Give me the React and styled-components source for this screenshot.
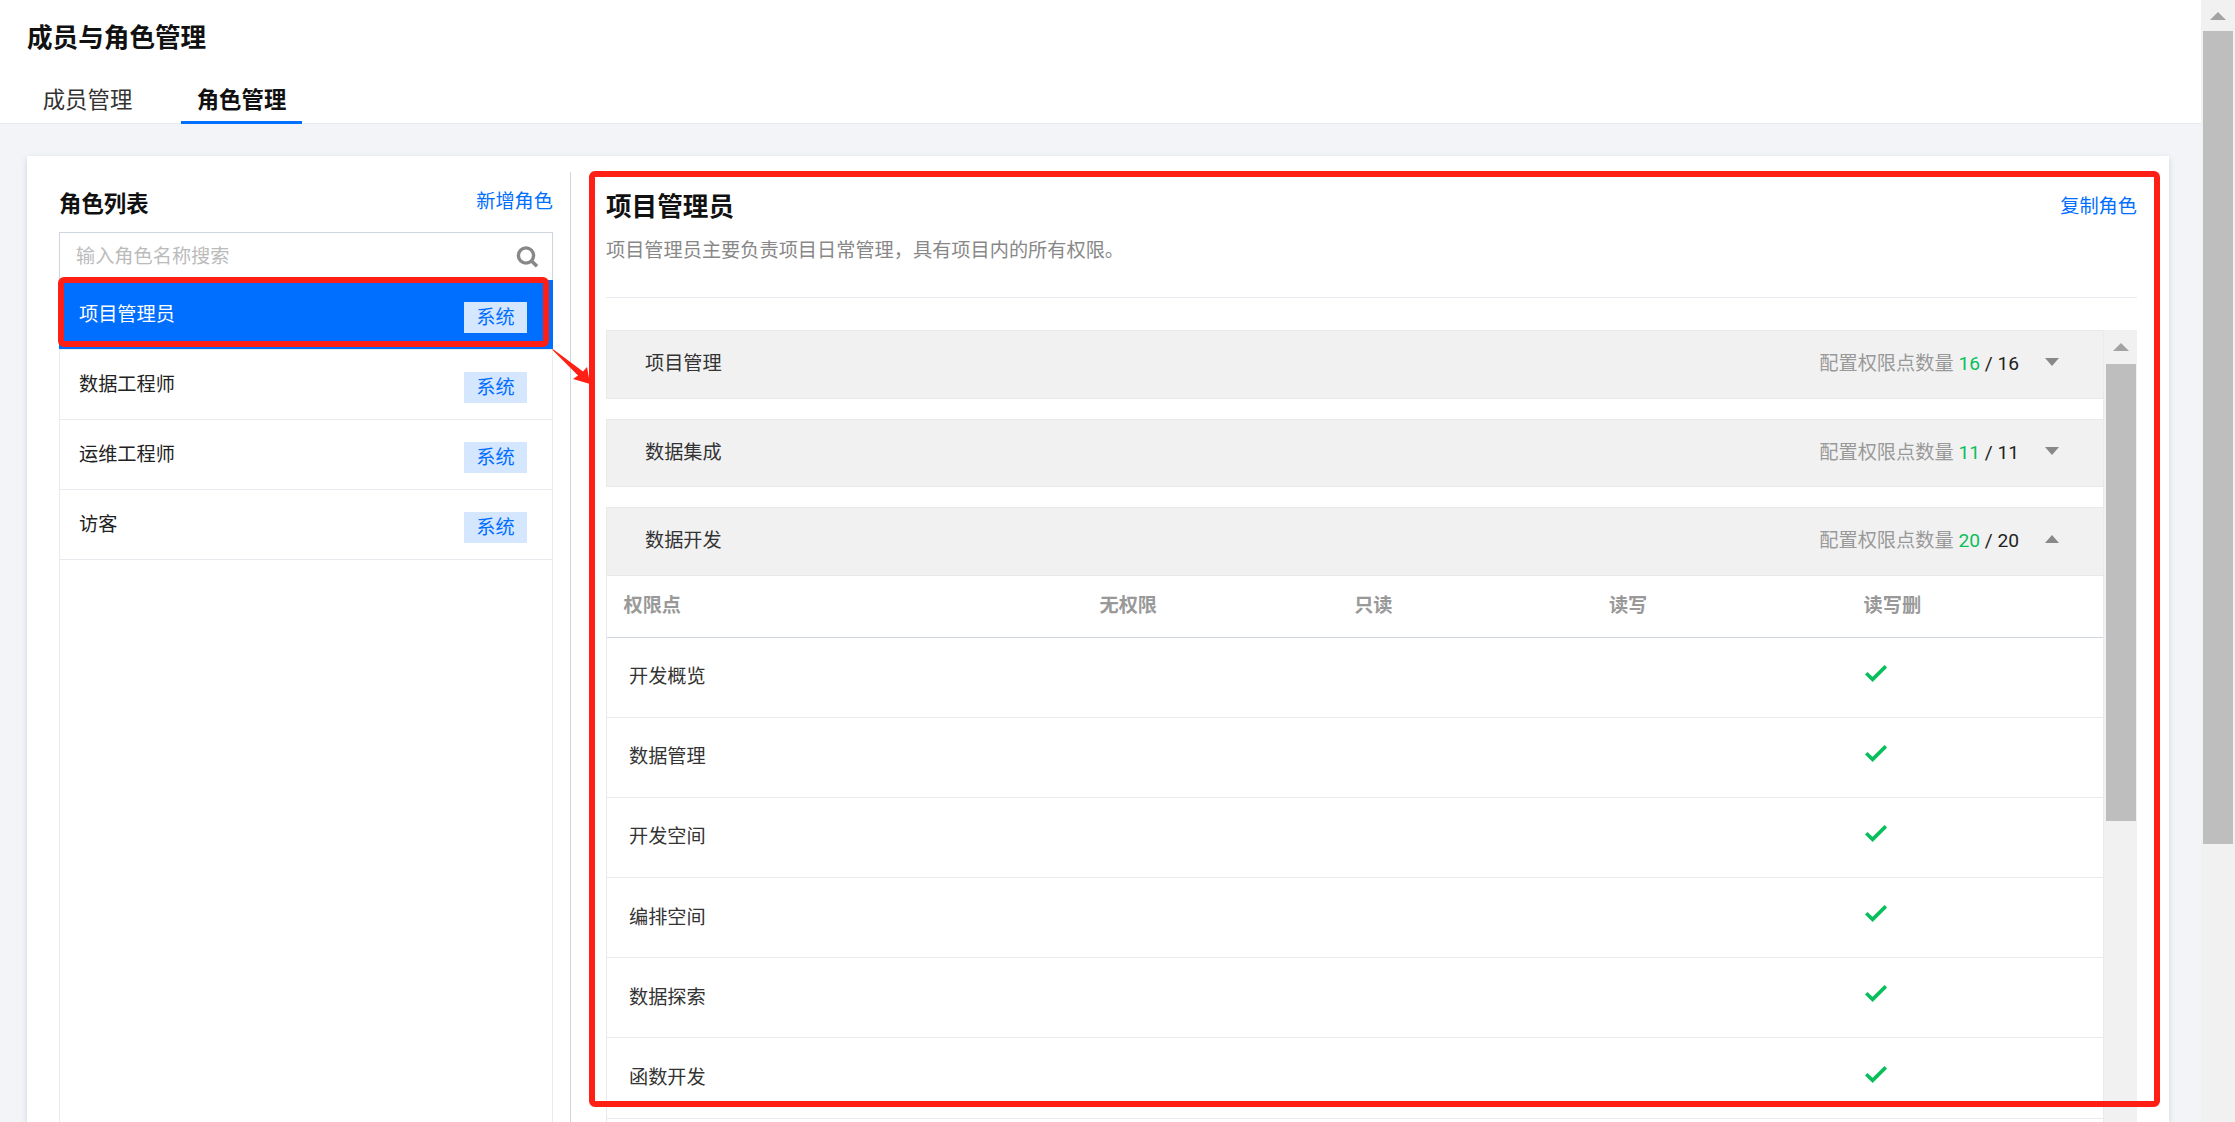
import React from 'react';
import styled, { createGlobalStyle } from 'styled-components';

const ROLES = ['项目管理员', '数据工程师', '运维工程师', '访客'];

const GROUPS = [
  { name: '项目管理', done: 16, total: 16 },
  { name: '数据集成', done: 11, total: 11 },
  { name: '数据开发', done: 20, total: 20, open: true },
];

const COLUMNS = ['权限点', '无权限', '只读', '读写', '读写删'];
const PERMISSIONS = ['开发概览', '数据管理', '开发空间', '编排空间', '数据探索', '函数开发', ''];

const App = () => {
  return (
    <Shell>
      <GlobalStyle />
      <Main>
        <Header>
          <PageTitle>成员与角色管理</PageTitle>
          <Tabs>
            <Tab>成员管理</Tab>
            <Tab $active>角色管理</Tab>
          </Tabs>
        </Header>

        <Content>
          <Card>
            <RolePanel>
              <RoleHead>
                <RoleHeading>角色列表</RoleHeading>
                <LinkText>新增角色</LinkText>
              </RoleHead>
              <SearchBox>
                <SearchInput placeholder="输入角色名称搜索" />
                <SearchIcon viewBox="0 0 23 22">
                  <circle cx="10" cy="9.5" r="7.6" fill="none" stroke="#888" strokeWidth="3.4" />
                  <path d="M15.5 15 L21 20.3" stroke="#888" strokeWidth="3.6" fill="none" />
                </SearchIcon>
              </SearchBox>
              <RoleList>
                {ROLES.map((role, i) => (
                  <RoleItem key={role} $active={i === 0}>
                    <RoleName>{role}</RoleName>
                    <SystemTag>系统</SystemTag>
                  </RoleItem>
                ))}
              </RoleList>
            </RolePanel>

            <DetailPanel>
              <DetailInfo>
                <DetailTitleRow>
                  <DetailTitle>项目管理员</DetailTitle>
                  <LinkText>复制角色</LinkText>
                </DetailTitleRow>
                <DetailDesc>项目管理员主要负责项目日常管理，具有项目内的所有权限。</DetailDesc>
              </DetailInfo>

              <GroupArea>
                <GroupList>
                  {GROUPS.map((group) => (
                    <Group key={group.name}>
                      <GroupHead>
                        <GroupName>{group.name}</GroupName>
                        <GroupMeta>
                          配置权限点数量 <DoneCount>{group.done}</DoneCount> <TotalCount>/ {group.total}</TotalCount>
                        </GroupMeta>
                        <Caret $up={group.open} />
                      </GroupHead>
                      {group.open && (
                        <PermTable>
                          <PermHeadRow>
                            {COLUMNS.map((col) => (
                              <PermHeadCell key={col}>{col}</PermHeadCell>
                            ))}
                          </PermHeadRow>
                          {PERMISSIONS.map((perm, i) => (
                            <PermRow key={i}>
                              <PermName>{perm}</PermName>
                              <PermCell />
                              <PermCell />
                              <PermCell />
                              <PermCell>
                                {perm && (
                                  <CheckIcon viewBox="0 0 22 17">
                                    <path d="M1.2 8.2 L7.6 14.4 L20.8 1.4" fill="none" stroke="#0abf5b" strokeWidth="3.6" />
                                  </CheckIcon>
                                )}
                              </PermCell>
                            </PermRow>
                          ))}
                        </PermTable>
                      )}
                    </Group>
                  ))}
                </GroupList>

                <InnerScroll>
                  <ScrollArrowBox $height={34}>
                    <ScrollArrow />
                  </ScrollArrowBox>
                  <ScrollThumb $height={457} />
                </InnerScroll>
              </GroupArea>
            </DetailPanel>
          </Card>
        </Content>
      </Main>

      <OuterScroll>
        <ScrollArrowBox $height={31}>
          <ScrollArrow />
        </ScrollArrowBox>
        <ScrollThumb $height={813} />
      </OuterScroll>

      <RoleMark />
      <PanelMark />
      <ArrowMark viewBox="0 0 42 38">
        <polygon points="2,1.5 3.5,1.5 33,23.5 37,19 40,36 23,31 28,27.5" fill="#ff1f14" />
      </ArrowMark>
    </Shell>
  );
};

export default App;


const GlobalStyle = createGlobalStyle`
  html, body {
    margin: 0;
    padding: 0;
    height: 100%;
    overflow: hidden;
    background: #fff;
  }

  body {
    font-family: Roboto, "Noto Sans CJK SC", sans-serif;
    font-size: 19.2px;
    color: #222;
  }

  * {
    box-sizing: border-box;
  }
`;

const Shell = styled.div`
  position: relative;
  display: flex;
  width: 2235px;
  height: 1122px;
  overflow: hidden;
`;

const Main = styled.div`
  flex: 1;
  min-width: 0;
  display: flex;
  flex-direction: column;
  background: #f2f4f8;
`;

const Header = styled.header`
  height: 124px;
  padding: 18px 0 0 27px;
  background: #fff;
  border-bottom: 1px solid #e7eaef;
`;

const PageTitle = styled.h1`
  margin: 0;
  font-size: 25.6px;
  line-height: 40px;
  font-weight: 700;
  color: #111;
`;

const Tabs = styled.div`
  display: flex;
  gap: 33px;
  margin-top: 5px;
`;

const Tab = styled.div`
  height: 61px;
  width: 121px;
  padding-top: 21px;
  text-align: center;
  font-size: 22.4px;
  line-height: 32px;
  color: ${(p) => (p.$active ? '#111' : '#333')};
  font-weight: ${(p) => (p.$active ? 700 : 400)};
  border-bottom: 3px solid ${(p) => (p.$active ? '#006eff' : 'transparent')};
`;

const Content = styled.main`
  flex: 1;
  min-height: 0;
  padding: 32px 32px 0 27px;
`;

const Card = styled.div`
  display: flex;
  height: 100%;
  padding: 16px 32px 0 32px;
  background: #fff;
  box-shadow: 0 2px 6px rgba(54, 58, 80, 0.16);
`;

const RolePanel = styled.section`
  width: 494px;
  flex: none;
  display: flex;
  flex-direction: column;
  margin-right: 17px;
`;

const RoleHead = styled.div`
  height: 60px;
  display: flex;
  align-items: center;
  justify-content: space-between;
`;

const RoleHeading = styled.h2`
  margin: 0;
  padding-top: 4px;
  font-size: 22.4px;
  line-height: 32px;
  font-weight: 700;
  color: #111;
`;

const LinkText = styled.a`
  font-size: 19.2px;
  line-height: 28px;
  color: #006eff;
`;

const SearchBox = styled.div`
  height: 48px;
  display: flex;
  align-items: center;
  padding: 0 13px 0 16px;
  border: 1px solid #cfd5de;
  border-bottom: none;
`;

const SearchInput = styled.input`
  flex: 1;
  min-width: 0;
  border: none;
  outline: none;
  padding: 0;
  font: inherit;
  font-size: 19.2px;
  color: #333;

  &::placeholder {
    color: #bbb;
    opacity: 1;
  }
`;

const SearchIcon = styled.svg`
  width: 23px;
  height: 22px;
  flex: none;
`;

const RoleList = styled.div`
  flex: 1;
  border-left: 1px solid #e7eaef;
  border-right: 1px solid #e7eaef;
`;

const RoleItem = styled.div`
  height: 70px;
  display: flex;
  align-items: center;
  justify-content: space-between;
  padding: ${(p) => (p.$active ? '0 26px 0 20px' : '0 25px 0 19px')};
  margin: 0 ${(p) => (p.$active ? '-1px' : '0')};
  background: ${(p) => (p.$active ? '#006eff' : '#fff')};
  color: ${(p) => (p.$active ? '#fff' : '#222')};
  border-bottom: 1px solid #e7eaef;
`;

const RoleName = styled.span`
  line-height: 28px;
`;

const SystemTag = styled.span`
  width: 63px;
  height: 31px;
  margin-top: 6px;
  text-align: center;
  font-size: 19.2px;
  line-height: 31px;
  color: #006eff;
  background: #d5e7ff;
`;

const DetailPanel = styled.section`
  flex: 1;
  min-width: 0;
  display: flex;
  flex-direction: column;
  padding-left: 35px;
  border-left: 1px solid #cfd5de;
`;

const DetailInfo = styled.div`
  padding: 15px 0 32px;
  margin-bottom: 32px;
  border-bottom: 1px solid #e7eaef;
`;

const DetailTitleRow = styled.div`
  display: flex;
  align-items: center;
  justify-content: space-between;
  height: 40px;
`;

const DetailTitle = styled.h2`
  margin: 0;
  font-size: 25.6px;
  line-height: 40px;
  font-weight: 700;
  color: #111;
`;

const DetailDesc = styled.p`
  margin: 10px 0 0;
  font-size: 19.2px;
  line-height: 28px;
  color: #888;
`;

const GroupArea = styled.div`
  flex: 1;
  min-height: 0;
  display: flex;
`;

const GroupList = styled.div`
  flex: 1;
  min-width: 0;
  overflow: hidden;
`;

const Group = styled.div`
  margin-bottom: 20px;
`;

const GroupHead = styled.div`
  height: 68.5px;
  display: flex;
  align-items: center;
  padding: 0 44px 0 38px;
  background: #f1f1f1;
  border: 1px solid #e9e9e9;
  border-right: none;
`;

const GroupName = styled.span`
  flex: 1;
  line-height: 28px;
  color: #333;
`;

const GroupMeta = styled.span`
  line-height: 28px;
  color: #999;
  white-space: nowrap;
`;

const DoneCount = styled.span`
  color: #0abf5b;
`;

const TotalCount = styled.span`
  color: #222;
`;

const Caret = styled.i`
  width: 0;
  height: 0;
  margin-left: 26px;
  margin-top: -4px;
  border-left: 7px solid transparent;
  border-right: 7px solid transparent;
  border-top: ${(p) => (p.$up ? 'none' : '8px solid #888')};
  border-bottom: ${(p) => (p.$up ? '8px solid #888' : 'none')};
`;

const PermTable = styled.div`
  border-left: 1px solid #e7eaef;
`;

const PermHeadRow = styled.div`
  display: grid;
  grid-template-columns: 476px repeat(4, 254.7px);
  height: 62px;
  align-items: center;
  border-bottom: 1px solid #cfd5de;
`;

const PermHeadCell = styled.div`
  padding-left: 16.5px;
  font-weight: 700;
  color: #999;
  line-height: 28px;
`;

const PermRow = styled.div`
  display: grid;
  grid-template-columns: 476px repeat(4, 254.7px);
  height: 80.2px;
  align-items: center;
  border-bottom: 1px solid #e7eaef;
`;

const PermName = styled.div`
  padding-left: 22px;
  line-height: 28px;
  color: #333;
`;

const PermCell = styled.div`
  padding-left: 18px;
  display: flex;
`;

const CheckIcon = styled.svg`
  width: 22px;
  height: 17px;
  margin-bottom: 8px;
`;

const InnerScroll = styled.div`
  width: 34px;
  flex: none;
  display: flex;
  flex-direction: column;
  align-items: center;
  background: #f1f1f1;
  border-left: 1px solid #e7eaef;
`;

const OuterScroll = styled.div`
  width: 34px;
  flex: none;
  display: flex;
  flex-direction: column;
  align-items: center;
  background: #f1f1f1;
`;

const ScrollArrowBox = styled.div`
  width: 100%;
  height: ${(p) => p.$height}px;
  display: flex;
  align-items: center;
  justify-content: center;
`;

const ScrollArrow = styled.i`
  width: 0;
  height: 0;
  border-left: 8px solid transparent;
  border-right: 8px solid transparent;
  border-bottom: 8px solid #a3a3a3;
`;

const ScrollThumb = styled.div`
  width: 30px;
  height: ${(p) => p.$height}px;
  background: #bebebe;
`;

/* red annotations drawn on top of the screenshot */
const RoleMark = styled.div`
  position: absolute;
  left: 58px;
  top: 277px;
  width: 491px;
  height: 70px;
  border: 6px solid #ff1f14;
  border-radius: 6px;
`;

const PanelMark = styled.div`
  position: absolute;
  left: 589px;
  top: 171px;
  width: 1571px;
  height: 936px;
  border: 6px solid #ff1f14;
  border-radius: 6px;
`;

const ArrowMark = styled.svg`
  position: absolute;
  left: 550px;
  top: 348px;
  width: 42px;
  height: 38px;
`;
